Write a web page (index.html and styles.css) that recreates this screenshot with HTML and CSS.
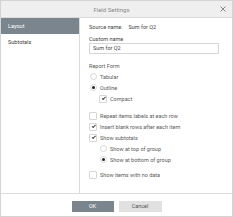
FILE: index.html
```html
<!DOCTYPE html>
<html>
<head>
<meta charset="utf-8">
<link rel="stylesheet" href="styles.css">
</head>
<body>
<div class="dialog">
  <div class="header">
    <span class="title">Field Settings</span>
    <svg class="close" width="6" height="6" viewBox="0 0 6 6"><path d="M0.5 0.5L5.5 5.5M5.5 0.5L0.5 5.5" stroke="#7a7a7a" stroke-width="0.9" fill="none"/></svg>
  </div>
  <div class="main">
    <div class="sidebar">
      <div class="nav-item active">Layout</div>
      <div class="nav-item">Subtotals</div>
    </div>
    <div class="content">
      <div class="source"><span>Source name:</span><span class="source-val">Sum for Q2</span></div>
      <div class="label">Custom name</div>
      <div class="input">Sum for Q2</div>
      <div class="row heading">Report Form</div>
      <div class="row"><span class="radio"></span>Tabular</div>
      <div class="row"><span class="radio on"></span>Outline</div>
      <div class="row indent"><span class="check on"></span>Compact</div>
      <div class="group">
        <div class="row"><span class="check"></span>Repeat items labels at each row</div>
        <div class="row"><span class="check on"></span>Insert blank rows after each item</div>
        <div class="row"><span class="check on"></span>Show subtotals</div>
        <div class="row indent"><span class="radio"></span>Show at top of group</div>
        <div class="row indent"><span class="radio on"></span>Show at bottom of group</div>
      </div>
      <div class="row last"><span class="check"></span>Show items with no data</div>
    </div>
  </div>
  <div class="footer">
    <div class="btn ok">OK</div>
    <div class="btn cancel">Cancel</div>
  </div>
</div>
</body>
</html>
```
FILE: styles.css
```css
html, body {
  margin: 0;
  padding: 0;
  background: #ffffff;
}
.dialog {
  width: 233px;
  height: 217px;
  box-sizing: border-box;
  border: 1px solid #d4d4d4;
  display: flex;
  flex-direction: column;
  font-family: Roboto, "Liberation Sans", sans-serif;
  color: #5a5a5a;
  background: #fff;
}
.header {
  height: 16px;
  flex: none;
  background: #efefef;
  border-bottom: 1px solid #dcdcdc;
  display: flex;
  align-items: center;
  justify-content: center;
  position: relative;
  padding-right: 10px;
}
.title {
  font-size: 6px;
  color: #8a8a8a;
}
.close {
  position: absolute;
  right: 6px;
  top: 5px;
}
.main {
  flex: none;
  height: 175px;
  display: flex;
}
.sidebar {
  width: 78px;
  flex: none;
  border-right: 1px solid #dcdcdc;
}
.nav-item {
  height: 16px;
  line-height: 16px;
  padding-left: 7px;
  font-size: 5.5px;
  color: #3a3a3a;
}
.nav-item + .nav-item {
  height: 17px;
  line-height: 17px;
}
.nav-item.active {
  background: #7b858d;
  color: #fff;
}
.content {
  flex: 1;
  padding: 4px 13px 0 9px;
  font-size: 5.5px;
  color: #5a5a5a;
}
.source {
  height: 11px;
  line-height: 11px;
  display: flex;
  gap: 6px;
  color: #444;
}
.label {
  margin-top: 2px;
  height: 8px;
  line-height: 8px;
  color: #444;
}
.input {
  height: 11px;
  box-sizing: border-box;
  border: 1px solid #d6d6d6;
  line-height: 9px;
  padding-left: 3px;
  color: #444;
}
.row {
  height: 11px;
  display: flex;
  align-items: center;
  gap: 3px;
  white-space: nowrap;
}
.heading {
  margin-top: 6px;
}
.indent {
  padding-left: 10px;
}
.group {
  margin-top: 6px;
}
.last {
  margin-top: 4px;
}
.radio {
  width: 7px;
  height: 7px;
  box-sizing: border-box;
  border: 1px solid #d6d6d6;
  border-radius: 50%;
  flex: none;
  position: relative;
  margin-left: 1px;
}
.radio.on::after {
  content: "";
  position: absolute;
  left: 1px;
  top: 1px;
  width: 3px;
  height: 3px;
  border-radius: 50%;
  background: #222;
}
.check {
  width: 8px;
  height: 8px;
  box-sizing: border-box;
  border: 1px solid #d6d6d6;
  border-radius: 1px;
  flex: none;
  position: relative;
}
.check.on::after {
  content: "";
  position: absolute;
  left: 1.6px;
  top: 1.5px;
  width: 2.6px;
  height: 1.3px;
  border-left: 0.9px solid #444;
  border-bottom: 0.9px solid #444;
  transform: rotate(-45deg);
}
.footer {
  flex: 1;
  border-top: 1px solid #dcdcdc;
  display: flex;
  justify-content: center;
  align-items: flex-start;
  padding-top: 7px;
  gap: 5px;
}
.btn {
  height: 11px;
  line-height: 11px;
  text-align: center;
  font-size: 5.5px;
}
.ok {
  width: 42px;
  background: #7b858d;
  color: #fff;
}
.cancel {
  width: 43px;
  background: #e1e1e1;
  color: #555;
}
```
